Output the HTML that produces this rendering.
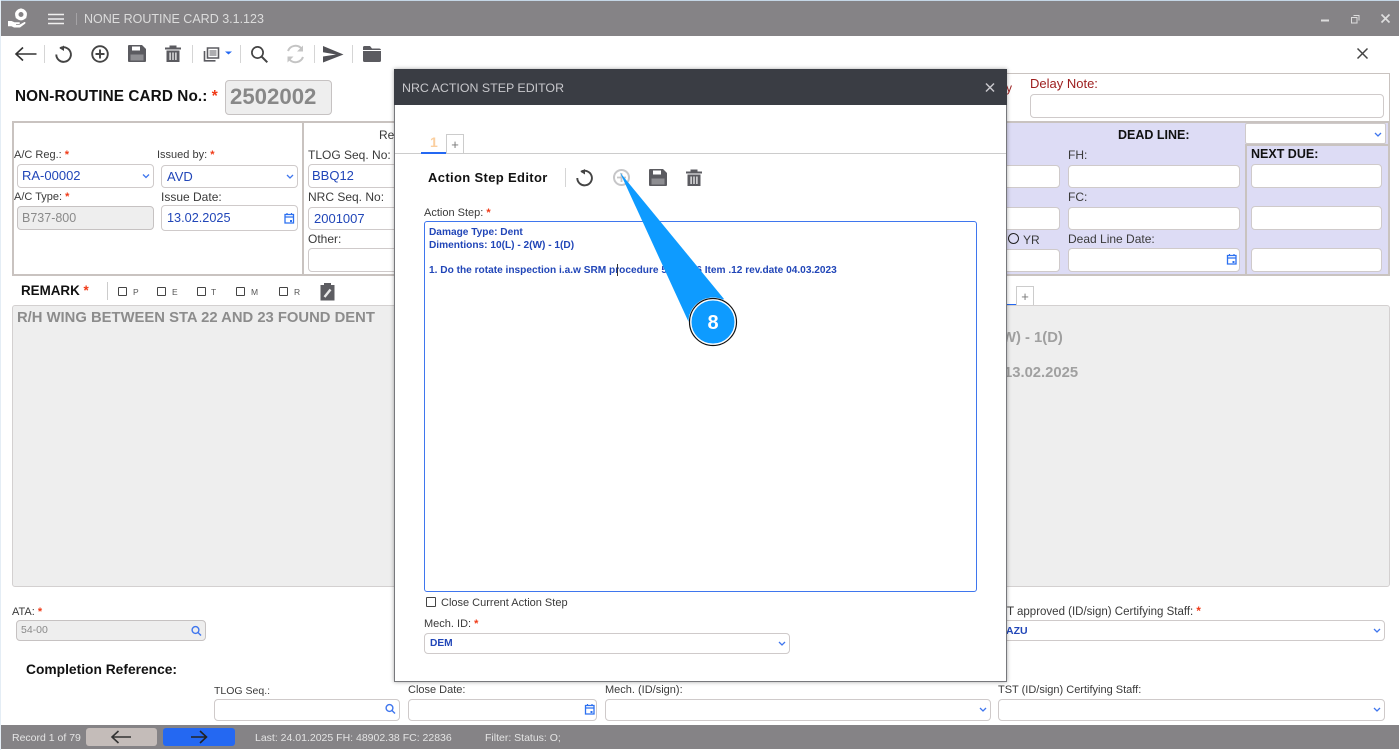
<!DOCTYPE html>
<html lang="en">
<head>
<meta charset="utf-8">
<title>NONE ROUTINE CARD</title>
<style>
html,body{margin:0;padding:0;background:#fff}
body{width:1399px;height:750px;position:relative;overflow:hidden;font-family:"Liberation Sans",sans-serif;font-size:12px;color:#333}
.a{position:absolute;box-sizing:border-box}
.t{position:absolute;white-space:nowrap;line-height:16px;height:16px;font-size:12px;color:#3a3a3a}
.s{font-size:11px}
.st{font-size:10.5px;color:#e4e4e4}
.r{color:#f03a17;font-weight:bold}
.b{font-weight:bold;color:#111}
.i{position:absolute;box-sizing:border-box;background:#fff;border:1px solid #cfcaca;border-radius:4px;color:#2146b8;font-size:13px;line-height:21px;padding-left:5px;white-space:nowrap;overflow:hidden}
.d{background:#eeeeee;color:#8a8a8a;border-color:#c6c2c2}
.cb{position:absolute;box-sizing:border-box;width:9px;height:9px;border:1px solid #444;border-radius:1px;background:#fff}
.g{position:absolute;font-weight:bold;color:#8c8c8c;white-space:nowrap;line-height:18px;font-size:14.8px}
.at{font-size:10.15px;font-weight:bold;color:#2146b8}
svg{position:absolute;left:0;top:0}
</style>
</head>
<body>
<!-- outer edge -->
<div class="a" style="left:0;top:0;width:1399px;height:1px;background:#c4d6e6"></div>
<div class="a" style="left:0;top:0;width:1px;height:750px;background:#e4edf5"></div>
<!-- title bar -->
<div class="a" style="left:1px;top:1px;width:1398px;height:35px;background:#858386"></div>
<div class="t" style="left:84px;top:11px;font-size:12.5px;color:#dcdcdc">NONE ROUTINE CARD 3.1.123</div>

<!-- header -->
<div class="t b" style="left:15px;top:88px;font-size:15.3px;height:18px;line-height:18px;letter-spacing:.1px">NON-ROUTINE CARD No.: <span class="r">*</span></div>
<div class="i d" style="left:225px;top:80px;width:107px;height:35px;font-size:22.2px;line-height:32px;font-weight:bold;color:#888;padding-left:4px;border-radius:4px">2502002</div>

<!-- delay note panel -->
<div class="a" style="left:1000px;top:73px;width:390px;height:49px;border:1px solid #c9c3c0;border-bottom:none"></div>
<div class="t" style="left:1006px;top:80px;color:#9c1c1c">y</div>
<div class="t" style="left:1030px;top:76px;color:#9c1c1c;font-size:13px">Delay Note:</div>
<div class="i" style="left:1030px;top:94px;width:354px;height:24px"></div>

<!-- main form frame -->
<div class="a" style="left:12px;top:121px;width:1378px;height:155px;border:2px solid #c9c3c0"></div>
<div class="a" style="left:302px;top:122px;width:2px;height:153px;background:#c9c3c0"></div>
<div class="a" style="left:1000px;top:123px;width:388px;height:151px;background:#dddcf5"></div>
<div class="a" style="left:1245px;top:145px;width:2px;height:130px;background:#c9c3c0"></div>
<div class="a" style="left:1245px;top:144px;width:144px;height:2px;background:#c9c3c0"></div>

<!-- left fields -->
<div class="t s" style="left:14px;top:147px">A/C Reg.: <span class="r">*</span></div>
<div class="t s" style="left:157px;top:147px">Issued by: <span class="r">*</span></div>
<div class="i" style="left:17px;top:164px;width:137px;height:24px;padding-left:4px;line-height:22px">RA-00002</div>
<div class="i" style="left:161px;top:165px;width:137px;height:23px">AVD</div>
<div class="t s" style="left:14px;top:189px">A/C Type: <span class="r">*</span></div>
<div class="t" style="left:161px;top:189px">Issue Date:</div>
<div class="i d" style="left:17px;top:206px;width:137px;height:24px;padding-left:4px;font-size:12.5px;line-height:22px">B737-800</div>
<div class="i" style="left:161px;top:205px;width:137px;height:26px;line-height:24px;font-size:12.7px">13.02.2025</div>

<!-- middle fields -->
<div class="t" style="left:379px;top:127px">Re</div>
<div class="t" style="left:308px;top:147px">TLOG Seq. No:</div>
<div class="i" style="left:308px;top:164px;width:100px;height:24px;padding-left:3px;line-height:22px">BBQ12</div>
<div class="t" style="left:308px;top:189px">NRC Seq. No:</div>
<div class="i" style="left:308px;top:207px;width:100px;height:23px;padding-left:5px">2001007</div>
<div class="t" style="left:308px;top:231px">Other:</div>
<div class="i" style="left:308px;top:248px;width:100px;height:24px"></div>

<!-- right fields -->
<div class="t b" style="left:1118px;top:127px;font-size:12.5px">DEAD LINE:</div>
<div class="i" style="left:1245px;top:123px;width:141px;height:21px;border-radius:2px"></div>
<div class="t" style="left:1068px;top:147px">FH:</div>
<div class="t b" style="left:1251px;top:146px;font-size:12.5px">NEXT DUE:</div>
<div class="i" style="left:990px;top:165px;width:70px;height:23px"></div>
<div class="i" style="left:1068px;top:165px;width:172px;height:23px"></div>
<div class="i" style="left:1251px;top:164px;width:131px;height:24px"></div>
<div class="t" style="left:1068px;top:189px">FC:</div>
<div class="i" style="left:990px;top:207px;width:70px;height:23px"></div>
<div class="i" style="left:1068px;top:207px;width:172px;height:23px"></div>
<div class="i" style="left:1251px;top:206px;width:131px;height:24px"></div>
<div class="a" style="left:1008px;top:233px;width:11px;height:11px;border:1.3px solid #222;border-radius:50%"></div>
<div class="t" style="left:1023px;top:232px">YR</div>
<div class="t" style="left:1068px;top:231px">Dead Line Date:</div>
<div class="i" style="left:990px;top:249px;width:70px;height:23px"></div>
<div class="i" style="left:1068px;top:248px;width:172px;height:24px"></div>
<div class="i" style="left:1251px;top:248px;width:131px;height:24px"></div>

<!-- remark -->
<div class="t b" style="left:21px;top:283px;font-size:13.4px">REMARK <span class="r">*</span></div>
<div class="a" style="left:107px;top:282px;width:1px;height:18px;background:#ccc"></div>
<div class="cb" style="left:118px;top:287px"></div><div class="t" style="left:133px;top:284px;font-size:8.5px;color:#555">P</div>
<div class="cb" style="left:157px;top:287px"></div><div class="t" style="left:172px;top:284px;font-size:8.5px;color:#555">E</div>
<div class="cb" style="left:197px;top:287px"></div><div class="t" style="left:211px;top:284px;font-size:8.5px;color:#555">T</div>
<div class="cb" style="left:236px;top:287px"></div><div class="t" style="left:251px;top:284px;font-size:8.5px;color:#555">M</div>
<div class="cb" style="left:279px;top:287px"></div><div class="t" style="left:294px;top:284px;font-size:8.5px;color:#555">R</div>
<div class="a" style="left:1000px;top:304px;width:17px;height:2px;background:#2468f2"></div>
<div class="a" style="left:1016px;top:286px;width:18px;height:19px;border:1px solid #ccc;border-bottom:none;text-align:center;line-height:19px;color:#777;font-size:13px">+</div>
<div class="a" style="left:12px;top:305px;width:1378px;height:282px;background:#eeeeee;border:1px solid #d3d0d0;border-radius:3px"></div>
<div class="g" style="left:17px;top:309px">R/H WING BETWEEN STA 22 AND 23 FOUND DENT</div>
<div class="g" style="left:1002px;top:329px;color:#a0a0a0">W) - 1(D)</div>
<div class="g" style="left:1004px;top:364px;color:#a0a0a0">13.02.2025</div>

<!-- lower form -->
<div class="t s" style="left:12px;top:604px">ATA: <span class="r">*</span></div>
<div class="i d" style="left:16px;top:620px;width:190px;height:21px;font-size:10.5px;line-height:19px;padding-left:4px">54-00</div>
<div class="t" style="left:1007px;top:604px;font-size:11.5px">T approved (ID/sign) Certifying Staff: <span class="r">*</span></div>
<div class="i" style="left:990px;top:620px;width:395px;height:21px;font-size:10.5px;line-height:20px;padding-left:15px;font-weight:bold">AZU</div>
<div class="t b" style="left:26px;top:662px;font-size:13.8px">Completion Reference:</div>
<div class="t" style="left:214px;top:683px;font-size:10.5px">TLOG Seq.:</div>
<div class="i" style="left:214px;top:699px;width:186px;height:22px"></div>
<div class="t s" style="left:408px;top:682px">Close Date:</div>
<div class="i" style="left:408px;top:699px;width:189px;height:22px"></div>
<div class="t s" style="left:605px;top:682px">Mech. (ID/sign):</div>
<div class="i" style="left:605px;top:699px;width:386px;height:22px"></div>
<div class="t s" style="left:998px;top:682px">TST (ID/sign) Certifying Staff:</div>
<div class="i" style="left:998px;top:699px;width:387px;height:22px"></div>

<!-- status bar -->
<div class="a" style="left:1px;top:725px;width:1398px;height:24px;background:#858386"></div>
<div class="t st" style="left:12px;top:730px">Record 1 of 79</div>
<div class="a" style="left:86px;top:728px;width:71px;height:18px;background:#c4bcb9;border-radius:3px"></div>
<div class="a" style="left:163px;top:728px;width:72px;height:18px;background:#2468f2;border-radius:3px"></div>
<div class="t st" style="left:255px;top:730px">Last: 24.01.2025 FH: 48902.38 FC: 22836</div>
<div class="t st" style="left:485px;top:730px">Filter: Status: O;</div>

<!-- background icons -->
<svg width="1399" height="750" viewBox="0 0 1399 750">
  <!-- app logo -->
  <g fill="#fff">
    <circle cx="21" cy="14.5" r="4.2" fill="none" stroke="#fff" stroke-width="3.4"/>
    <path d="M20 8.500h2v2h-2zM26 11.500l1 1.700-1.700 1-1-1.700zM16 11.500l-1 1.700 1.700 1 1-1.700zM26.500 16.500l-.5 2-1.900-.6.600-1.900zM15.500 16.500l.5 2 1.900-.6-.6-1.900z"/>
    <path d="M8 21h3.500l3 1.300h4.500c1.300 0 1.300 1.700 0 1.700h-3v.7h3.500l4.500-2.500c1.300-.6 2 .8 1 1.600L20 27.500h-6l-2.500-1.200H8z"/>
  </g>
  <!-- hamburger -->
  <path d="M48 14.500h16M48 19h16M48 23.500h16" stroke="#f0f0f0" stroke-width="1.600"/>
  <path d="M76.500 13v12" stroke="#a5a3a6"/>
  <!-- window controls -->
  <path d="M1321 20.500h8" stroke="#ddd" stroke-width="2"/>
  <path d="M1353.500 15.500h5.500v5M1351.500 17.500h5.500v5.500h-5.500z" fill="none" stroke="#ddd"/>
  <path d="M1381.500 14.500l8 8M1389.500 14.500l-8 8" stroke="#dedede" stroke-width="1.700"/>

  <!-- toolbar -->
  <path d="M36.500 54H16M23 47.500l-7 6.500 7 6.500" fill="none" stroke="#333" stroke-width="1.600"/>
  <path d="M44.500 45v18M192.500 45v18M240.500 45v18M314.500 45v18M352.500 45v18" stroke="#d5d5d5"/>
  <path d="M60 48.200A7.300 7.300 0 1 1 56.300 54.500" fill="none" stroke="#444" stroke-width="1.900"/>
  <path d="M64 45.500v5.500l-4.500-2.700z" fill="#444"/>
  <circle cx="100" cy="54" r="7.800" fill="none" stroke="#444" stroke-width="1.900"/>
  <path d="M95.500 54h9M100 49.500v9" stroke="#444" stroke-width="1.900"/>
  <path fill="#5b5b60" fill-rule="evenodd" d="M129 45h13l4 4v12a1 1 0 0 1-1 1h-16a1 1 0 0 1-1-1V46a1 1 0 0 1 1-1zM132 46.500v4h8v-4zM130.500 54.500v6h13v-6z"/>
  <path d="M130.500 54.500h13v6h-13z" fill="#8e8e92"/>
  <path fill="#5b5b60" fill-rule="evenodd" d="M165 47.500h4.500V45.500h7v2h4.500v2h-16zM166.500 50.500h13V62h-13zM169.500 52.500v7.500h1.200v-7.500zM172.400 52.500v7.500h1.200v-7.500zM175.300 52.500v7.500h1.200v-7.500z"/>
  <path fill="none" stroke="#5b5b60" stroke-width="1.600" d="M207.500 48h11v10h-11zM204.500 51v9.800h11"/>
  <path d="M209.500 51h7M209.500 53h7M209.500 55h7" stroke="#5b5b60"/>
  <path d="M225 51.500h7l-3.500 3z" fill="#2468f2"/>
  <circle cx="257.500" cy="52.500" r="5.600" fill="none" stroke="#444" stroke-width="1.700"/>
  <path d="M261.500 56.500l5.800 5.800" stroke="#444" stroke-width="2"/>
  <path d="M288 51a8 8 0 0 1 13.500-2.500M303 57a8 8 0 0 1-13.500 2.500" fill="none" stroke="#c4c4c4" stroke-width="2"/>
  <path d="M303 45.500v6h-6zM287.500 62.500v-6h6z" fill="#c4c4c4"/>
  <path d="M323 46l20.500 8.500L323 62.500v-6l13-2-13-2.200z" fill="#505055"/>
  <path fill="#5b5b60" d="M363 47.500a1.500 1.500 0 0 1 1.500-1.500h5.500l2 2.500h7a2 2 0 0 1 2 2V50h-18zM363 51h18v9.500a1.500 1.500 0 0 1-1.500 1.500h-15a1.500 1.500 0 0 1-1.500-1.500z"/>
  <path d="M1357.500 48.500l10 10M1367.500 48.500l-10 10" stroke="#444" stroke-width="1.500"/>

  <!-- select chevrons -->
  <g fill="none" stroke="#3f76ee" stroke-width="1.300">
    <path d="M143 174.500l3 3 3-3M287 175l3 3 3-3M1375 133l3 3 3-3M1374 629l3 3 3-3M980 708l3 3 3-3M1374 708l3 3 3-3"/>
  </g>
  <!-- calendars -->
  <g fill="none" stroke="#2c70f0" stroke-width="1.300">
    <path d="M285 214.500h8.500v8.500H285zM285 217h8.500"/>
    <path d="M1227.500 255.500h8.500v8.500h-8.500zM1227.500 258h8.500"/>
    <path d="M585.500 705.500h8.500v8.500h-8.500zM585.500 708h8.500"/>
  </g>
  <path d="M287 213v2M291.500 213v2M1229.500 254v2M1234 254v2M587.500 704v2M592 704v2" stroke="#2c70f0" stroke-width="1.200"/>
  <path d="M290 220h2v2h-2zM1232.500 261h2v2h-2zM590.500 711h2v2h-2z" fill="#2c70f0"/>
  <!-- search small -->
  <g fill="none" stroke="#3f76ee" stroke-width="1.400">
    <circle cx="195.500" cy="630" r="3.400"/><path d="M198 632.500l3 3"/>
    <circle cx="389.500" cy="708" r="3.400"/><path d="M392 710.500l3 3"/>
  </g>
  <!-- clipboard -->
  <path fill="#5d5d62" d="M320.500 285h3.500v-2h7v2h3.500v15.500h-14z"/>
  <path d="M324.500 297l6-7.500" stroke="#e8e8e8" stroke-width="2.400"/>
  <!-- status bar arrows -->
  <path d="M131 737h-19M118.500 731l-6.500 6 6.500 6" fill="none" stroke="#333" stroke-width="1.600"/>
  <path d="M191 737h15M200 731l6.500 6-6.500 6" fill="none" stroke="#222" stroke-width="1.600"/>
</svg>

<!-- dialog -->
<div class="a" style="left:394px;top:69px;width:613px;height:613px;background:#fff;border:1px solid #77787c;border-top:none;box-shadow:0 0 4px rgba(0,0,0,.35)"></div>
<div class="t" style="left:1007px;top:604px;font-size:11.5px;width:8px;overflow:hidden">T</div>
<div class="a" style="left:394px;top:69px;width:613px;height:36px;background:#3a3d44"></div>
<div class="t" style="left:402px;top:80px;font-size:12.4px;color:#c8c8cc">NRC ACTION STEP EDITOR</div>
<div class="t" style="left:430px;top:134px;font-size:14px;font-weight:bold;color:#fbcf9f">1</div>
<div class="a" style="left:395px;top:153px;width:611px;height:1px;background:#ccc"></div>
<div class="a" style="left:421px;top:152px;width:25px;height:2px;background:#2468f2"></div>
<div class="a" style="left:446px;top:134px;width:18px;height:20px;border:1px solid #ccc;border-bottom:none;text-align:center;line-height:19px;color:#777;font-size:13px">+</div>
<div class="t b" style="left:428px;top:170px;font-size:13px;letter-spacing:.35px">Action Step Editor</div>
<div class="t s" style="left:424px;top:205px">Action Step: <span class="r">*</span></div>
<div class="a" style="left:424px;top:221px;width:553px;height:371px;border:1px solid #3f76ee;border-radius:3px;background:#fff"></div>
<div class="t at" style="left:429px;top:225px">Damage Type: Dent</div>
<div class="t at" style="left:429px;top:238px">Dimentions: 10(L) - 2(W) - 1(D)</div>
<div class="t at" style="left:429px;top:263px">1. Do the rotate inspection i.a.w SRM procedure 54-00-06 Item .12 rev.date 04.03.2023</div>
<div class="a" style="left:617px;top:264px;width:1px;height:12px;background:#333"></div>
<div class="cb" style="left:426px;top:597px;width:10px;height:10px"></div>
<div class="t s" style="left:441px;top:595px">Close Current Action Step</div>
<div class="t s" style="left:424px;top:616px">Mech. ID: <span class="r">*</span></div>
<div class="i" style="left:424px;top:633px;width:366px;height:21px;font-size:10.2px;font-weight:bold;line-height:20px;padding-left:5px">DEM</div>

<svg width="1399" height="750" viewBox="0 0 1399 750">
  <path d="M986 83.500l8 8M994 83.500l-8 8" stroke="#c8c8cc" stroke-width="1.500"/>
  <path d="M565.500 168v19" stroke="#d5d5d5"/>
  <path d="M581 171.700A7.300 7.300 0 1 1 577.300 178" fill="none" stroke="#444" stroke-width="1.900"/>
  <path d="M585 169v5.500l-4.500-2.700z" fill="#444"/>
  <circle cx="621.500" cy="177.500" r="7.500" fill="none" stroke="#c6c6c8" stroke-width="2"/>
  <path d="M617 177.500h9M621.500 173v9" stroke="#c6c6c8" stroke-width="1.800"/>
  <path fill="#5b5b60" fill-rule="evenodd" d="M650 169h13l4 4v12a1 1 0 0 1-1 1h-16a1 1 0 0 1-1-1v-15a1 1 0 0 1 1-1zM653 170.500v4h8v-4zM651.500 178.500v6h13v-6z"/>
  <path d="M651.500 178.500h13v6h-13z" fill="#8e8e92"/>
  <path fill="#5b5b60" fill-rule="evenodd" d="M686 171.500h4.500v-2h7v2h4.500v2h-16zM687.500 174.500h13V186h-13zM690.500 176.500v7.500h1.200v-7.500zM693.400 176.500v7.500h1.200v-7.500zM696.300 176.500v7.500h1.200v-7.500z"/>
  <path d="M779 642l3 3 3-3" fill="none" stroke="#3f76ee" stroke-width="1.300"/>
  <!-- callout -->
  <path d="M620 172.500L724 299L690 325z" fill="#0e9bff"/>
  <circle cx="713" cy="322" r="23" fill="#0e9bff" stroke="#fff" stroke-width="3"/>
  <circle cx="713" cy="322" r="23.500" fill="none" stroke="#111" stroke-width="1.200"/>
  <text x="713" y="329" text-anchor="middle" font-family="Liberation Sans, sans-serif" font-weight="bold" font-size="20" fill="#fff">8</text>
</svg>
</body>
</html>
